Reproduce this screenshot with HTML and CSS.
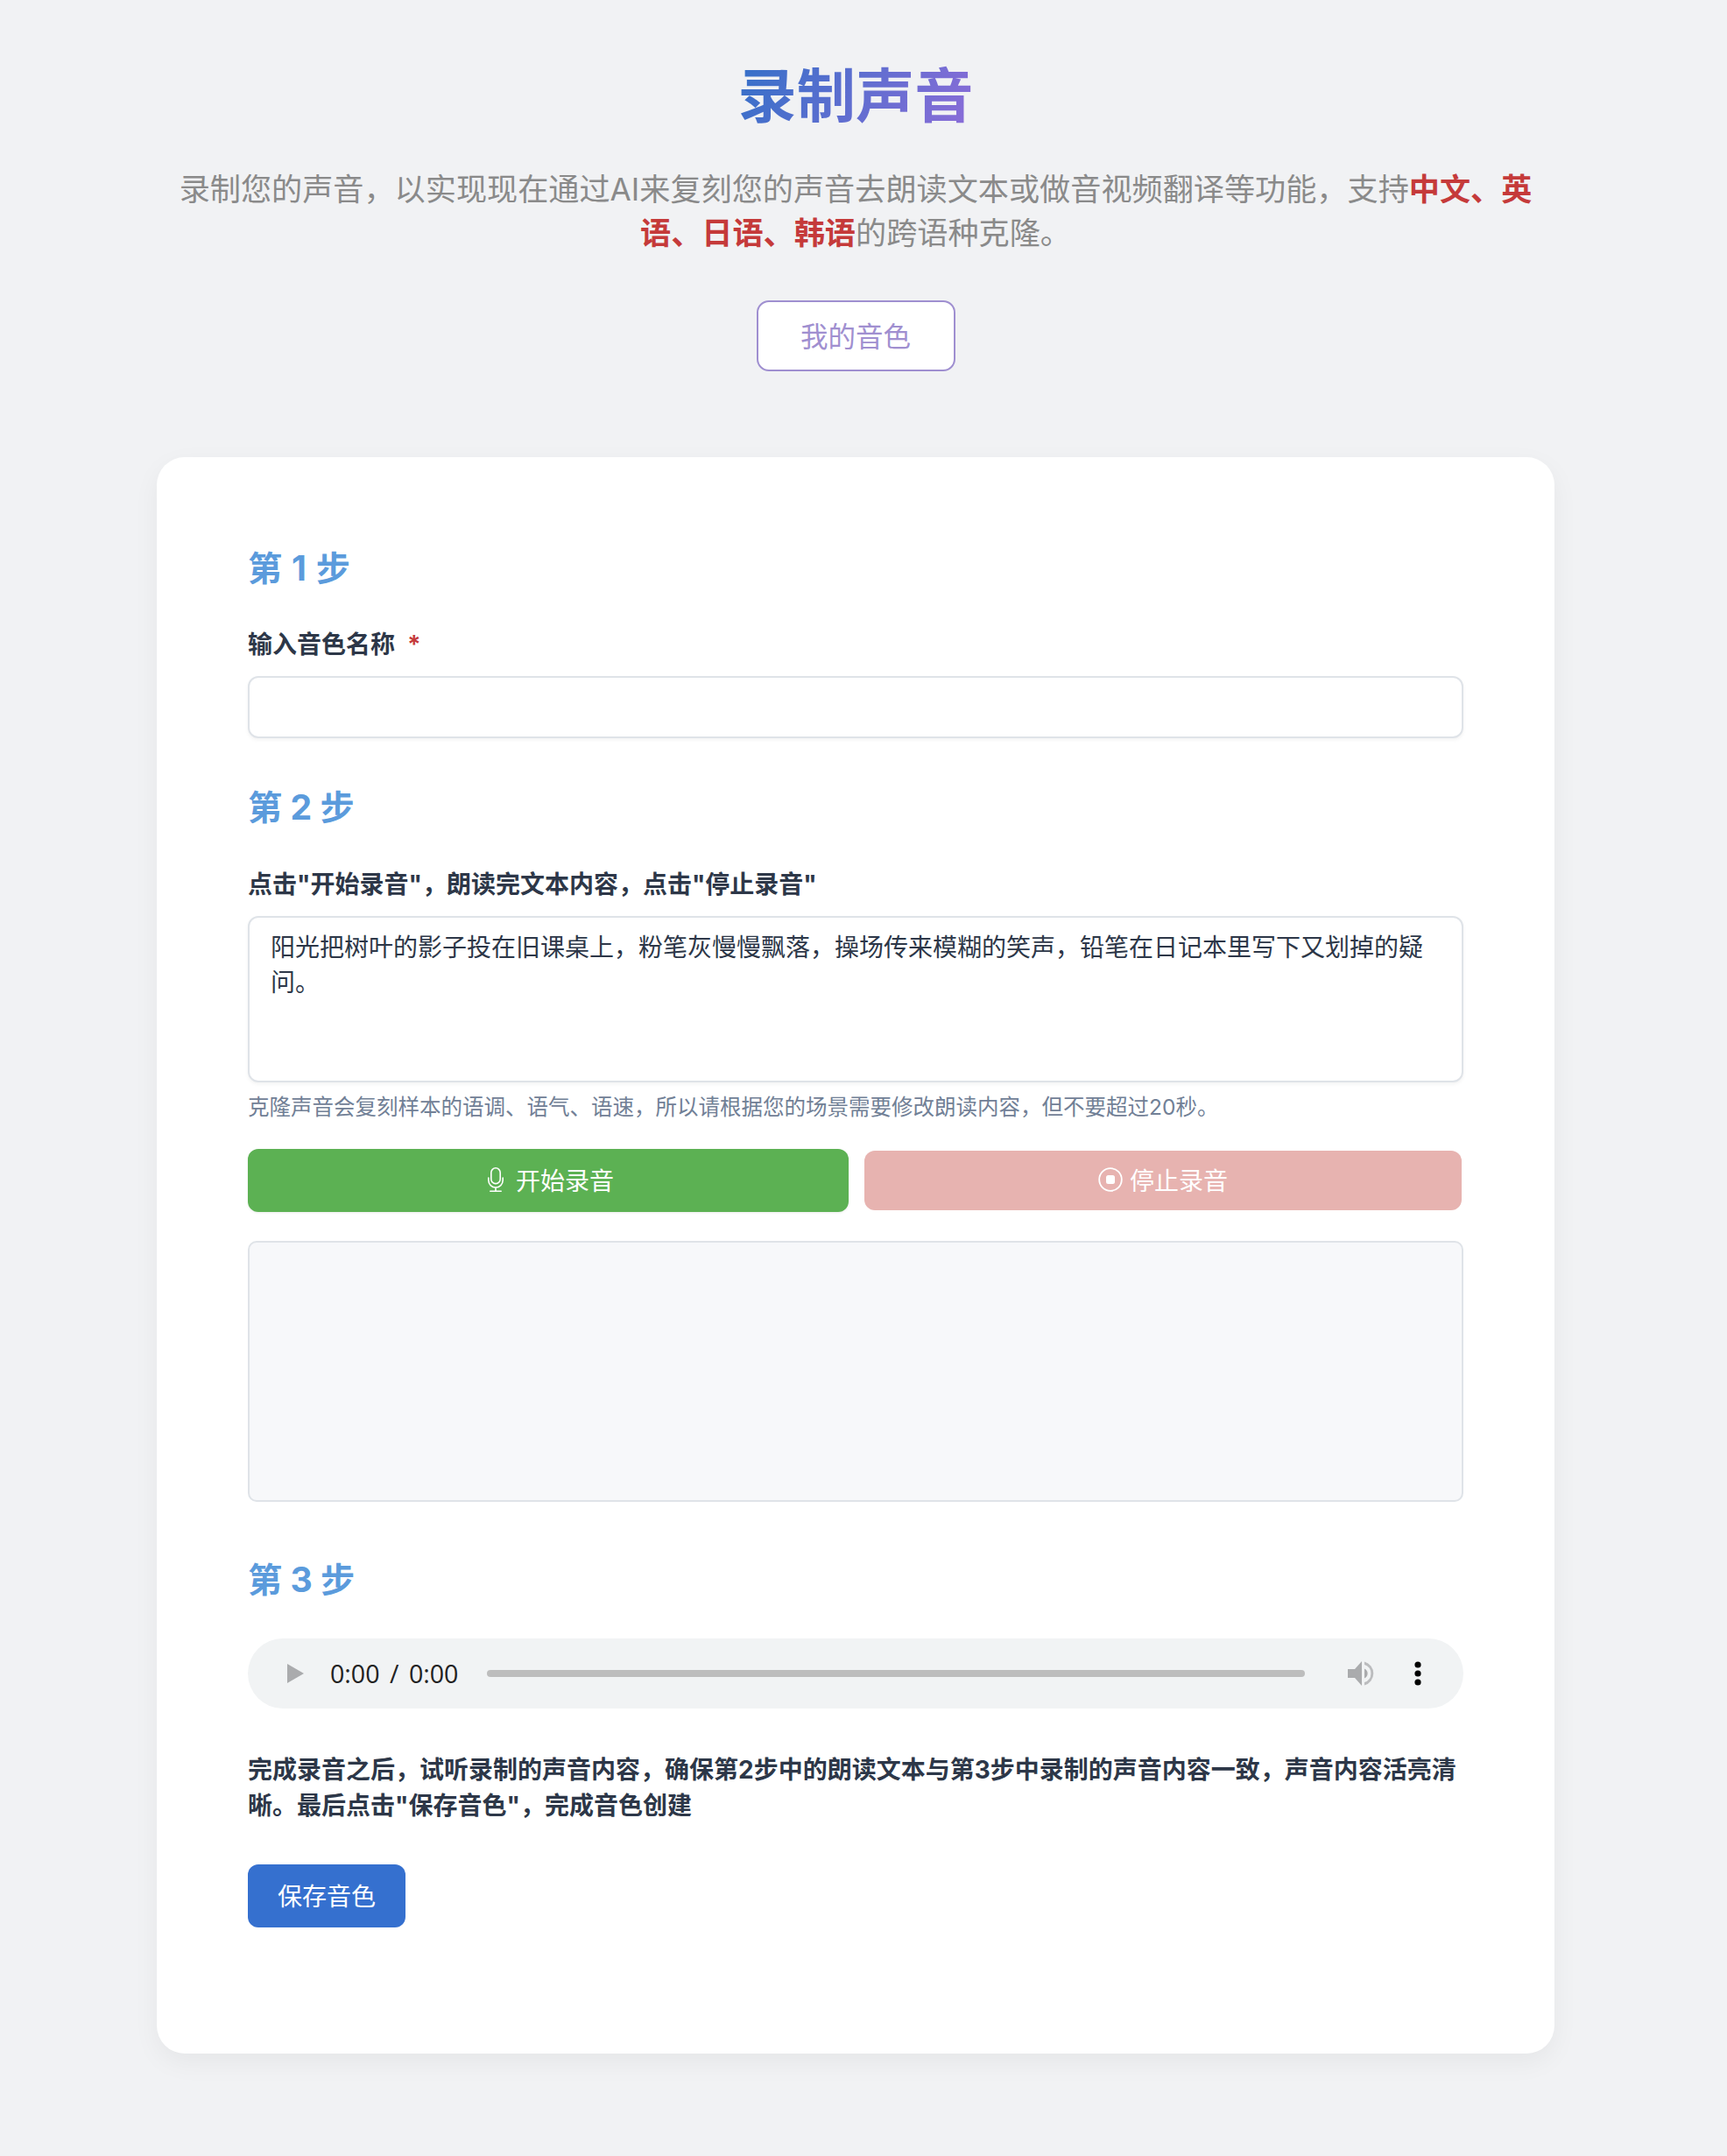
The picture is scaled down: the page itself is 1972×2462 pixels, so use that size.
FILE: index.html
```html
<!DOCTYPE html>
<html lang="zh-CN">
<head>
<meta charset="utf-8">
<title>录制声音</title>
<link rel="stylesheet" href="styles.css">
</head>
<body>
<main class="page">
  <header class="hero">
    <h1 class="hero-title">录制声音</h1>
    <p class="hero-desc">录制您的声音，以实现现在通过AI来复刻您的声音去朗读文本或做音视频翻译等功能，支持<strong>中文、英</strong><strong>语、日语、韩语</strong>的跨语种克隆。</p>
    <button class="btn-outline" type="button"><span>我的音色</span></button>
  </header>
  <section class="card">
    <h2 class="step step-first">第 <span class="digit-wide">1</span> 步</h2>
    <label class="field-label label-name">输入音色名称<span class="required">*</span></label>
    <input class="text-input" type="text">

    <h2 class="step step-second">第 2 步</h2>
    <label class="field-label label-read">点击"开始录音"，朗读完文本内容，点击"停止录音"</label>
    <textarea class="text-area">阳光把树叶的影子投在旧课桌上，粉笔灰慢慢飘落，操场传来模糊的笑声，铅笔在日记本里写下又划掉的疑问。</textarea>
    <p class="hint">克隆声音会复刻样本的语调、语气、语速，所以请根据您的场景需要修改朗读内容，但不要超过20秒。</p>
    <div class="rec-row">
      <button class="btn btn-start" type="button">
        <svg class="icon" viewBox="0 0 18 28" width="18" height="28" fill="none" stroke="#fff" stroke-width="1.6" stroke-linecap="round"><rect x="3.8" y="0.8" width="10.4" height="17.8" rx="5.2"/><path d="M0.8 12v2.8a8.2 8.2 0 0 0 16.4 0V12M9 23v4M2.8 27.2h12.4"/></svg>
        <span>开始录音</span>
      </button>
      <button class="btn btn-stop" type="button">
        <svg class="icon" viewBox="0 0 28 28" width="28" height="28" fill="none"><circle cx="14" cy="14" r="12.8" stroke="#fff" stroke-width="1.8"/><rect x="9" y="9" width="10" height="10" rx="2.5" fill="#fff"/></svg>
        <span>停止录音</span>
      </button>
    </div>
    <div class="wave-box"></div>

    <h2 class="step step-third">第 3 步</h2>
    <div class="player">
      <svg class="play" viewBox="0 0 19 22" width="19" height="22"><path d="M0 0l19 11L0 22z" fill="#aaabad"/></svg>
      <span class="time">0:00 / 0:00</span>
      <div class="track"></div>
      <svg class="volume" viewBox="0 0 31 30" width="31" height="30"><path d="M0 10h8L16 1v28l-8-9H0z" fill="#aaabad"/><path d="M19 9.5a6 6 0 0 1 0 11z" fill="#aaabad"/><path d="M19 1.5a14 14 0 0 1 0 27v-3.4a10.6 10.6 0 0 0 0-20.2z" fill="#bbbcbe"/></svg>
      <svg class="more" viewBox="0 0 8 28" width="8" height="28"><circle cx="4" cy="4" r="3.6"/><circle cx="4" cy="14" r="3.6"/><circle cx="4" cy="24" r="3.6"/></svg>
    </div>
    <p class="note">完成录音之后，试听录制的声音内容，确保第2步中的朗读文本与第3步中录制的声音内容一致，声音内容活亮清晰。最后点击"保存音色"，完成音色创建</p>
    <button class="btn btn-save" type="button">保存音色</button>
  </section>
</main>
</body>
</html>
```
FILE: styles.css
```css
* { box-sizing: border-box; }
html, body { margin: 0; padding: 0; }
body {
  background: #f1f2f4;
  font-family: Inter, "Noto Sans CJK SC", sans-serif;
  color: #2d3748;
  height: 2462px;
  overflow: hidden;
}
.page {
  width: 1954px;
  display: flex;
  flex-direction: column;
  align-items: center;
}
.hero {
  display: flex;
  flex-direction: column;
  align-items: center;
  padding-top: 68px;
}
.hero-title {
  margin: 0;
  font-size: 67.2px;
  line-height: 84px;
  font-weight: 700;
  background: linear-gradient(120deg, #3470c8, #8c6cd8);
  -webkit-background-clip: text;
  background-clip: text;
  color: transparent;
}
.hero-desc {
  margin: 39px 0 0;
  width: 1570px;
  font-size: 35.15px;
  line-height: 50px;
  color: #8a8a8a;
  text-align: center;
}
.hero-desc strong { color: #c53a3a; font-weight: 700; }
.btn-outline {
  margin-top: 52px;
  width: 227px;
  height: 81px;
  padding: 0 0 3px;
  background: #fff;
  border: 2px solid #9f8fd0;
  border-radius: 14px;
  font: inherit;
  font-size: 31.5px;
  color: #a08fd0;
}
.card {
  margin-top: 98px;
  width: 1596px;
  height: 1823px;
  padding: 103px 104px 0;
  background: #fff;
  border-radius: 32px;
  box-shadow: 0 10px 30px rgba(0, 0, 0, .05);
}
.step {
  margin: 0;
  font-size: 39.2px;
  line-height: 47px;
  font-weight: 700;
  color: #5b9bdc;
}
.digit-wide { padding: 0 1.5px; }
.step-second { margin-top: 55px; }
.step-third { margin-top: 65px; }
.field-label {
  display: block;
  font-size: 28px;
  line-height: 42px;
  font-weight: 700;
  color: #2d3748;
}
.label-name { margin-top: 43px; }
.label-read { margin-top: 44px; }
.required { color: #c53a3a; margin-left: 14px; }
.text-input, .text-area {
  display: block;
  width: 100%;
  margin-top: 15px;
  background: #fff;
  border: 2.5px solid #dfe3e8;
  border-radius: 12px;
  font: inherit;
  font-size: 28px;
  line-height: 40px;
  color: #2d3748;
  box-shadow: 0 2px 4px rgba(0, 0, 0, .05);
}
.text-input { height: 71px; }
.text-area {
  height: 190px;
  padding: 14px 24px;
  resize: none;
  overflow: hidden;
}
.hint {
  margin: 11px 0 0;
  font-size: 24.5px;
  line-height: 35px;
  color: #718096;
}
.rec-row {
  display: grid;
  grid-template-columns: 1fr 1fr;
  gap: 16px;
  margin-top: 30px;
}
.btn {
  display: flex;
  align-items: center;
  justify-content: center;
  gap: 14px;
  height: 72px;
  padding: 0 0 2px;
  border: 0;
  border-radius: 12px;
  font: inherit;
  font-size: 28px;
  color: #fff;
}
.icon { flex: none; }
.btn-start { padding-left: 6px; background: #5cb153; box-shadow: 0 1px 3px rgba(0,0,0,.08); }
.btn-stop { height: 68px; margin: 2px; background: #e7b3b0; gap: 8px; }
.wave-box {
  margin-top: 33px;
  height: 298px;
  background: #f7f8fa;
  border: 2.5px solid #dfe3e8;
  border-radius: 10px;
}
.player {
  display: flex;
  align-items: center;
  margin-top: 44px;
  height: 80px;
  padding: 0 48px 0 45px;
  background: #f1f3f4;
  border-radius: 40px;
}
.play { flex: none; }
.time {
  margin-left: 30px;
  width: 179px;
  padding-bottom: 2px;
  font-family: "Open Sans", sans-serif;
  font-size: 28.6px;
  word-spacing: 4px;
  color: #222;
  white-space: nowrap;
}
.track {
  flex: 1;
  height: 8px;
  border-radius: 4px;
  background: #bdbdbd;
}
.volume { flex: none; margin-left: 49px; }
.more { flex: none; margin-left: 45px; }
.note {
  margin: 50px 0 0;
  font-size: 28px;
  line-height: 41px;
  font-weight: 700;
  color: #2d3748;
}
.btn-save {
  margin-top: 46px;
  width: 180px;
  background: #3570cf;
}
```
